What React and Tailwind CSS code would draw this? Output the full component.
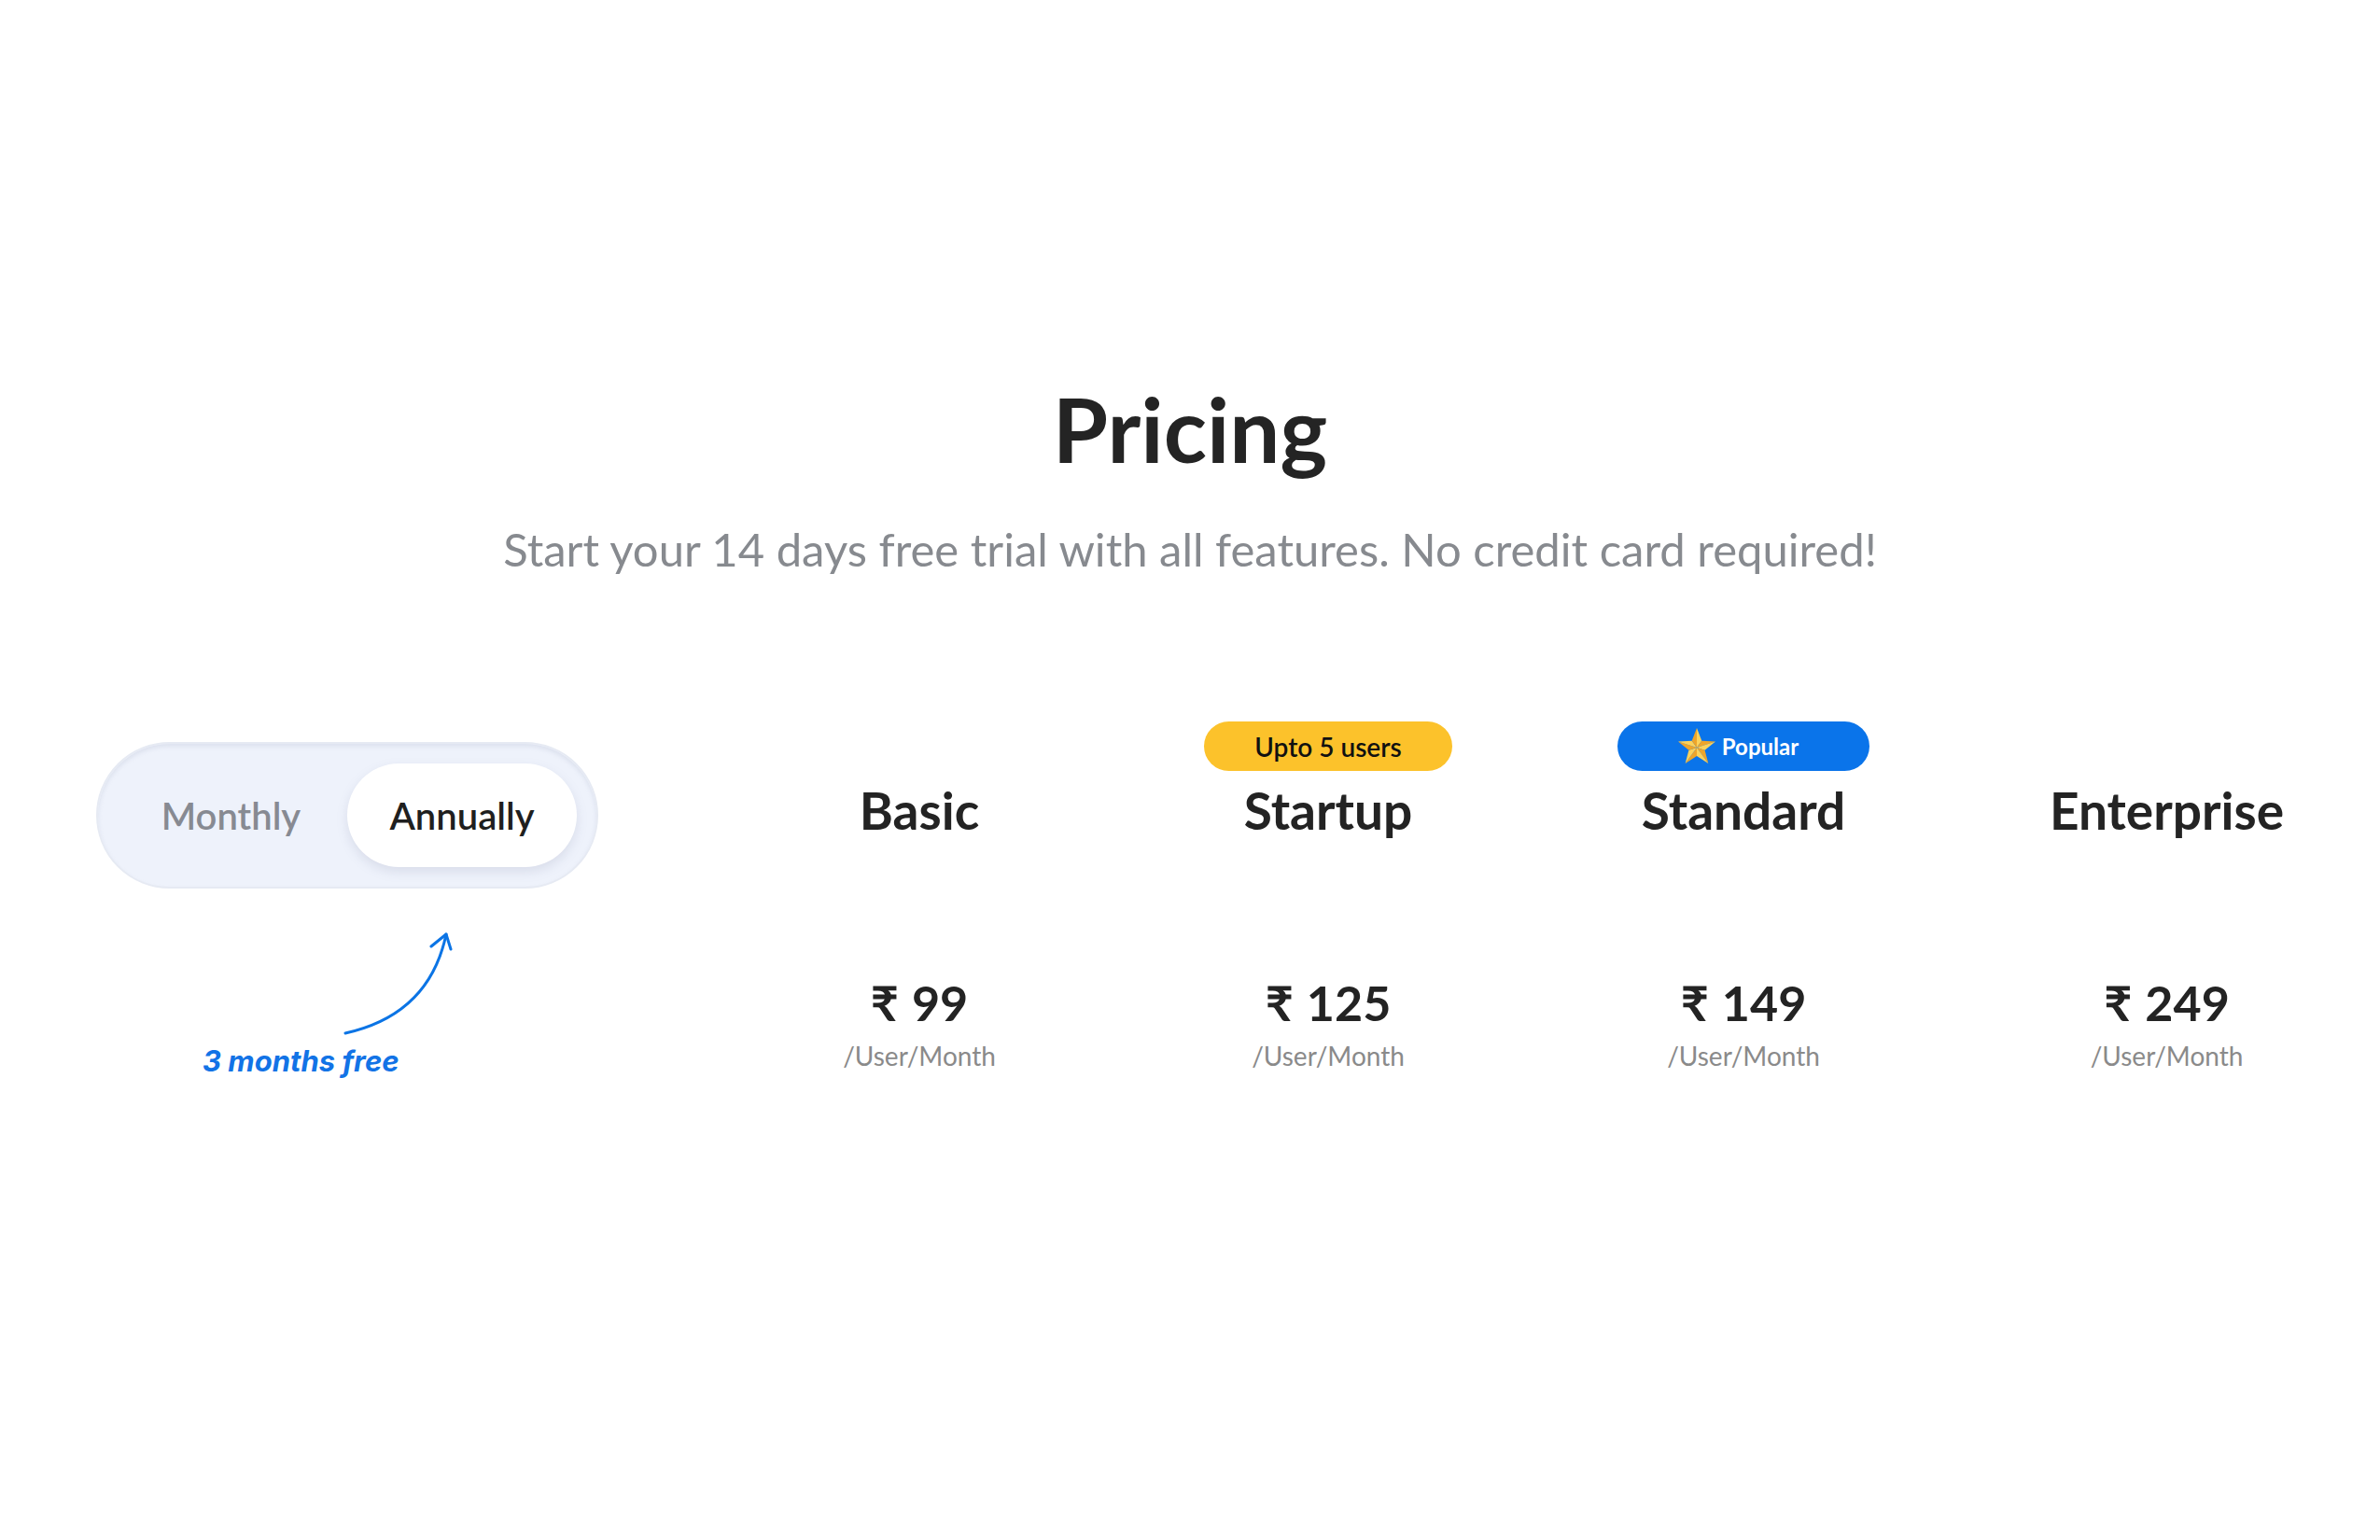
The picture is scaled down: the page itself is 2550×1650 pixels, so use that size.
import React from "react";

function Star() {
  const cx = 22, cy = 22, R = 21, r = 9;
  const pts = [];
  for (let i = 0; i < 10; i++) {
    const a = (-90 + i * 36) * Math.PI / 180;
    const rad = i % 2 === 0 ? R : r;
    pts.push([cx + rad * Math.cos(a), cy + rad * Math.sin(a)]);
  }
  const facets = [];
  for (let i = 0; i < 10; i++) {
    const p1 = pts[i];
    const p2 = pts[(i + 1) % 10];
    facets.push(
      <polygon
        key={i}
        points={`${cx},${cy} ${p1[0]},${p1[1]} ${p2[0]},${p2[1]}`}
        fill={i % 2 === 0 ? "#fcd25a" : "#eea52a"}
      />
    );
  }
  return (
    <svg width="42" height="40" viewBox="1 1 42 40" className="shrink-0">
      {facets}
    </svg>
  );
}

function Plan({ name, price, badge }) {
  return (
    <div className="flex flex-col items-center">
      <div className="h-[53px] flex items-center justify-center">{badge}</div>
      <div className="mt-[15px] text-[55px] leading-none font-bold text-[#232323]">{name}</div>
      <div className="mt-[152px] text-[52px] leading-none font-bold text-[#232323] flex items-baseline gap-[14px]">
        <span>₹</span>
        <span>{price}</span>
      </div>
      <div className="mt-[17px] text-[28px] leading-none text-[#8a8a8a]">/User/Month</div>
    </div>
  );
}

export default function App() {
  return (
    <div className="min-h-screen bg-white font-['Lato',sans-serif] text-[#232323]">
      <div className="pt-[411px] flex flex-col items-center">
        <h1 className="text-[96px] leading-none font-bold text-[#242424]">Pricing</h1>
        <p className="mt-[57px] text-[49px] leading-none text-[#878a8f]">
          Start your 14 days free trial with all features. No credit card required!
        </p>
      </div>

      <div className="mt-[160px] grid grid-cols-[767px_436px_440px_450px_457px]">
        <div className="pt-[22px] pl-[103px] flex flex-col">
          <div className="w-[538px] h-[157px] rounded-full bg-[#eef2fb] border-2 border-[#e6eaf3] shadow-[inset_0_3px_4px_rgba(170,180,205,0.25)] flex items-center pr-[21px]">
            <div className="flex-1 pl-[18px] text-center text-[40px] font-semibold text-[#878a92]">Monthly</div>
            <div className="w-[246px] h-[111px] rounded-full bg-white shadow-[0_5px_12px_rgba(120,130,160,0.18)] flex items-center justify-center text-[40px] font-semibold text-[#1f1f1f]">
              Annually
            </div>
          </div>
          <svg width="130" height="120" viewBox="0 0 130 120" className="ml-[257px] mt-[40px]">
            <path d="M10 115 Q100 95 118 9" fill="none" stroke="#0b74e5" strokeWidth="3" strokeLinecap="round" />
            <path d="M102 22 L118 9 L123 25" fill="none" stroke="#0b74e5" strokeWidth="3" strokeLinecap="round" strokeLinejoin="round" />
          </svg>
          <div className="ml-[114px] mt-[9px] text-[31px] leading-none font-bold italic text-[#1273e6] font-['Inter',sans-serif]">
            3 months free
          </div>
        </div>
        <Plan name="Basic" price="99" />
        <Plan
          name="Startup"
          price="125"
          badge={
            <div className="w-[266px] h-[53px] rounded-full bg-[#fcc22b] flex items-center justify-center text-[28px] font-semibold text-[#111]">
              Upto 5 users
            </div>
          }
        />
        <Plan
          name="Standard"
          price="149"
          badge={
            <div className="w-[270px] h-[53px] rounded-full bg-[#0a74ea] flex items-center justify-center gap-[6px] pr-[12px] text-[24px] font-bold text-white">
              <Star />
              <span>Popular</span>
            </div>
          }
        />
        <Plan name="Enterprise" price="249" />
      </div>
    </div>
  );
}
